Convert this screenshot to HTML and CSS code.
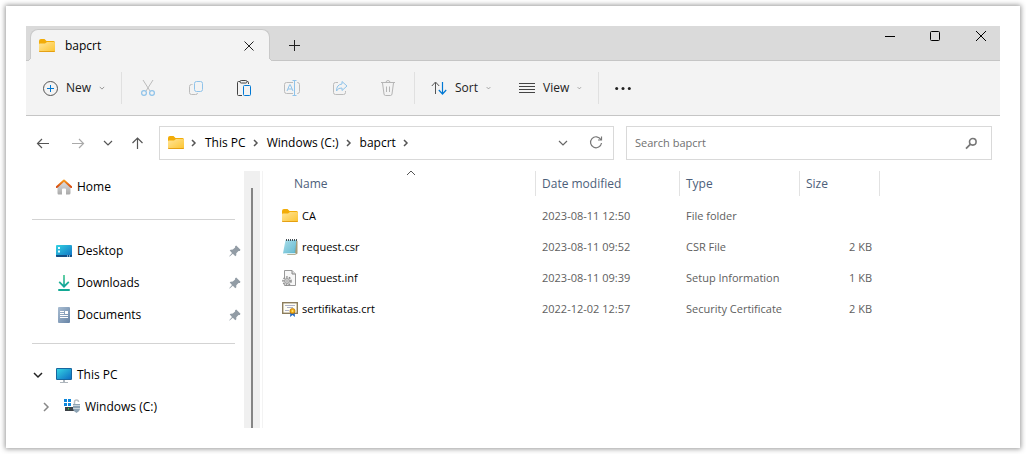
FILE: index.html
```html
<!DOCTYPE html>
<html lang="en">
<head>
<meta charset="utf-8">
<title>bapcrt</title>
<link rel="stylesheet" href="styles.css">
</head>
<body>
<svg class="defs" aria-hidden="true">
  <defs>
    <linearGradient id="g-folder" x1="0" y1="0" x2="1" y2="1"><stop offset="0" stop-color="#ffe59a"/><stop offset="1" stop-color="#fcc42f"/></linearGradient>
    <linearGradient id="g-screen" x1="0" y1="0" x2="1" y2="1"><stop offset="0" stop-color="#34d3e2"/><stop offset="1" stop-color="#0e6fc4"/></linearGradient>
    <linearGradient id="g-wall" x1="0" y1="0" x2="0" y2="1"><stop offset="0" stop-color="#e2e2e2"/><stop offset="1" stop-color="#a9a9a9"/></linearGradient>
    <linearGradient id="g-roof" x1="0" y1="0" x2="0" y2="1"><stop offset="0" stop-color="#f79a1c"/><stop offset="1" stop-color="#d5480f"/></linearGradient>
    <linearGradient id="g-down" x1="0" y1="0" x2="0" y2="1"><stop offset="0" stop-color="#3bc48c"/><stop offset="1" stop-color="#0b9f9b"/></linearGradient>
    <linearGradient id="g-doc" x1="0" y1="0" x2="1" y2="1"><stop offset="0" stop-color="#a9bdd2"/><stop offset="1" stop-color="#6784a6"/></linearGradient>
    <linearGradient id="g-note" x1="0" y1="0" x2="1" y2="1"><stop offset="0" stop-color="#b5e4ee"/><stop offset="1" stop-color="#54b2cc"/></linearGradient>
    <symbol id="folder" viewBox="0 0 16 16"><path d="M0 3Q0 1 2 1H5.500L7.500 3H14.500Q16 3 16 4.500V7H0Z" fill="#f2ac08"/><path d="M0 6.500Q0 5.500 1 5.500H6L8 4H15Q16 4 16 5V13Q16 14 15 14H1Q0 14 0 13Z" fill="url(#g-folder)"/><path d="M0 12.800Q.2 14 1 14H15Q15.800 14 16 12.800Q15.500 13.200 15 13.200H1Q.5 13.200 0 12.800Z" fill="#dd9100"/></symbol>
    <symbol id="chev-down" viewBox="0 0 16 16"><path d="M4 6L8 10L12 6" fill="none" stroke="currentColor" stroke-width="1.200"/></symbol>
    <symbol id="chev-small" viewBox="0 0 8 8"><path d="M1 2.500L4 5.500L7 2.500" fill="none" stroke="currentColor"/></symbol>
    <symbol id="chev-right" viewBox="0 0 16 16"><path d="M6 5L9 8L6 11" fill="none" stroke="currentColor" stroke-width="1.500"/></symbol>
    <symbol id="close" viewBox="0 0 16 16"><path d="M3.500 3.500L12.500 12.500M12.500 3.500L3.500 12.500" fill="none" stroke="currentColor"/></symbol>
    <symbol id="pin" viewBox="0 0 16 16"><path d="M9.200 2.500L13.500 6.800L12.800 8L11.500 7.900L9.300 10.200V12.300L8.300 13.200L5.800 10.700L2.700 13.600L2.200 13.300L5 9.900L2.700 7.500L3.600 6.700L5.800 6.600L8.100 4.400L8.100 3.200Z" fill="#929ca5"/></symbol>
  </defs>
</svg>
<main class="frame">
  <header class="titlebar">
    <div class="tab">
      <svg class="icon"><use href="#folder"/></svg>
      <span class="tab-title">bapcrt</span>
      <button class="tab-close" aria-label="Close tab"><svg class="icon"><use href="#close"/></svg></button>
    </div>
    <button class="tab-add" aria-label="New tab"><svg class="icon" viewBox="0 0 16 16"><path d="M8.500 3V14M3 8.500H14" fill="none" stroke="currentColor"/></svg></button>
    <div class="window-controls">
      <button aria-label="Minimize"><svg class="icon" viewBox="0 0 16 16"><path d="M4 8.500H14" stroke="#000"/></svg></button>
      <button aria-label="Maximize"><svg class="icon" viewBox="0 0 16 16"><rect x="3.500" y="3.500" width="9" height="9" rx="1" fill="none" stroke="#000"/></svg></button>
      <button aria-label="Close"><svg class="icon" viewBox="0 0 16 16"><path d="M3 3L13 13M13 3L3 13" stroke="#000"/></svg></button>
    </div>
  </header>

  <div class="toolbar">
    <button class="menu-button"><svg class="icon" viewBox="0 0 16 16" fill="none"><circle cx="8.500" cy="8.500" r="7" stroke="#555"/><path d="M8.500 5V12M5 8.500H12" stroke="#0078d4"/></svg>New<svg class="chev"><use href="#chev-small"/></svg></button>
    <span class="divider"></span>
    <div class="tools">
      <button aria-label="Cut" disabled><svg class="icon" viewBox="0 0 16 16" fill="none"><path d="M3 0L10 11M13 0L6 11" stroke="#bbb"/><g stroke="#8fc3ea" stroke-width="1.200"><circle cx="4" cy="13" r="2.400"/><circle cx="12" cy="13" r="2.400"/></g></svg></button>
      <button aria-label="Copy" disabled><svg class="icon" viewBox="0 0 16 16" fill="none"><path d="M4.500 4.500H3.500Q1.500 4.500 1.500 6.500V12.500Q1.500 14.500 3.500 14.500H7.500Q9.500 14.500 9.500 13" stroke="#bbb"/><rect x="6.500" y="1.500" width="8" height="10" rx="2" stroke="#8fc3ea"/></svg></button>
      <button aria-label="Paste"><svg class="icon" viewBox="0 0 16 16" fill="none"><path d="M6 15.500H2.500Q1.500 15.500 1.500 14.500V2.500Q1.500 1.500 2.500 1.500H4M11 1.500H11.500Q12.500 1.500 12.500 2.500V4" stroke="#444"/><rect x="4" y=".5" width="7" height="2.500" rx="1.200" stroke="#444"/><rect x="7.500" y="5.500" width="7" height="10" rx="1" stroke="#0078d4"/></svg></button>
      <button aria-label="Rename" disabled><svg class="icon" viewBox="0 0 16 16" fill="none"><path d="M9 2.500H2.500Q.5 2.500 .5 4.500V11.500Q.5 13.500 2.500 13.500H9M13 2.500H13.500Q15.500 2.500 15.500 4.500V11.500Q15.500 13.500 13.500 13.500H13" stroke="#bbb"/><path d="M3 11L5.700 4.700H6.300L9 11M4 9H8M8.500 .5H12.500M8.500 15.500H12.500M10.500 .5V15.500" stroke="#8fc3ea"/></svg></button>
      <button aria-label="Share" disabled><svg class="icon" viewBox="0 0 16 16" fill="none"><path d="M6 2.500H3.500Q1.500 2.500 1.500 4.500V12.500Q1.500 14.500 3.500 14.500H11.500Q13.500 14.500 13.500 12.500V11" stroke="#bbb"/><path d="M10 1.500L15 6L10 10.500V8Q6 7.500 4.500 11Q4.500 4.500 10 4Z" stroke="#8fc3ea" stroke-linejoin="round"/></svg></button>
      <button aria-label="Delete" disabled><svg class="icon" viewBox="0 0 16 16" fill="none" stroke="#b5b5b5"><path d="M1 2.500H15M2.500 3L4 14Q4.200 15.500 5.500 15.500H10.500Q11.800 15.500 12 14L13.500 3M6 2.500Q6 .5 8 .5Q10 .5 10 2.500M6.500 6.500V12M9.500 6.500V12"/></svg></button>
    </div>
    <span class="divider"></span>
    <button class="menu-button sort"><svg class="icon" viewBox="0 0 16 16" fill="none"><path d="M4.500 14V2.500M.8 6L4.500 2L8.200 6" stroke="#555"/><path d="M11.500 2V13.500M7.800 10L11.500 14L15.200 10" stroke="#0078d4" stroke-width="1.200"/></svg>Sort<svg class="chev"><use href="#chev-small"/></svg></button>
    <button class="menu-button"><svg class="icon" viewBox="0 0 16 16"><path d="M0 3.500H16M0 6.500H16M0 9.500H16M0 12.500H16" stroke="#444"/></svg>View<svg class="chev"><use href="#chev-small"/></svg></button>
    <span class="divider"></span>
    <button class="more" aria-label="See more"><svg class="icon" viewBox="0 0 16 16" fill="#222"><circle cx="1.700" cy="8.500" r="1.500"/><circle cx="8" cy="8.500" r="1.500"/><circle cx="14.300" cy="8.500" r="1.500"/></svg></button>
  </div>

  <div class="navbar">
    <div class="history">
      <button aria-label="Back"><svg class="icon" viewBox="0 0 16 16"><path d="M14 8.500H2.500M7 4L2.500 8.500L7 13" fill="none" stroke="#555" stroke-width="1.200"/></svg></button>
      <button aria-label="Forward"><svg class="icon" viewBox="0 0 16 16"><path d="M1 8.500H12.500M8 4L12.500 8.500L8 13" fill="none" stroke="#aaa" stroke-width="1.200"/></svg></button>
      <button class="recent" aria-label="Recent locations"><svg class="icon"><use href="#chev-down"/></svg></button>
      <button aria-label="Up"><svg class="icon" viewBox="0 0 16 16"><path d="M8.500 14V3M3.500 8L8.500 3L13.500 8" fill="none" stroke="#555" stroke-width="1.200"/></svg></button>
    </div>
    <nav class="address" aria-label="Address">
      <svg class="icon"><use href="#folder"/></svg>
      <svg class="crumb-sep"><use href="#chev-right"/></svg>
      <a href="#">This PC</a>
      <svg class="crumb-sep"><use href="#chev-right"/></svg>
      <a href="#">Windows (C:)</a>
      <svg class="crumb-sep"><use href="#chev-right"/></svg>
      <a href="#">bapcrt</a>
      <svg class="crumb-sep"><use href="#chev-right"/></svg>
      <div class="address-actions">
        <button aria-label="Previous locations"><svg class="icon"><use href="#chev-down"/></svg></button>
        <button aria-label="Refresh"><svg class="icon" viewBox="0 0 16 16"><path d="M12.800 4.500A5.500 5.500 0 1 0 13.500 8M13.500 1.500V5H10" fill="none" stroke="#777" stroke-width="1.200"/></svg></button>
      </div>
    </nav>
    <div class="search">
      <input type="text" placeholder="Search bapcrt" aria-label="Search bapcrt">
      <button aria-label="Search"><svg class="icon" viewBox="0 0 16 16"><circle cx="9.800" cy="6.800" r="3.300" fill="none" stroke="#777" stroke-width="1.600"/><path d="M7.500 9.200L3 13.700" stroke="#777" stroke-width="1.800"/></svg></button>
    </div>
  </div>

  <div class="body">
    <aside class="sidebar">
      <nav class="tree" aria-label="Folders">
        <a class="item" href="#"><svg class="icon" viewBox="0 0 16 16"><path d="M1.500 7L8 1.500L14.500 7V14Q14.500 15.500 13 15.500H10V10.500Q10 9.500 9 9.500H7Q6 9.500 6 10.500V15.500H2.500Q1.500 15.500 1.500 14Z" fill="url(#g-wall)"/><path d="M.8 8L8 1.500L15.200 8" fill="none" stroke="url(#g-roof)" stroke-width="2" stroke-linejoin="round" stroke-linecap="round"/></svg>Home</a>
        <hr>
        <a class="item" href="#"><svg class="icon" viewBox="0 0 16 16"><rect y="2" width="16" height="12" rx="1" fill="url(#g-screen)"/><path d="M0 12H16V13Q16 14 15 14H1Q0 14 0 13Z" fill="#124f87"/><path d="M2 4H4V6H2ZM2 7.500H4V9.500H2ZM11 12.500H12V13.500H11ZM13 12.500H14V13.500H13Z" fill="#e7fbff"/></svg>Desktop<svg class="pin"><use href="#pin"/></svg></a>
        <a class="item" href="#"><svg class="icon" viewBox="0 0 16 16"><path d="M7.200 0H8.800V9.600L12.200 6.200L13.400 7.500L8 13L2.600 7.500L3.800 6.200L7.200 9.600Z" fill="url(#g-down)"/><rect x="2" y="14" width="12" height="2" rx="1" fill="#12a994"/></svg>Downloads<svg class="pin"><use href="#pin"/></svg></a>
        <a class="item" href="#"><svg class="icon" viewBox="0 0 16 16"><rect x="2" width="12" height="16" rx="1" fill="url(#g-doc)"/><path d="M4 4H8V5H4ZM4 6H8V7H4ZM9 4H12V7H9ZM4 8H12V9H4ZM4 10H12V11H4Z" fill="#fff"/></svg>Documents<svg class="pin"><use href="#pin"/></svg></a>
        <hr class="close-rule">
        <a class="item" href="#"><svg class="twist" viewBox="0 0 16 16"><path d="M4 6L8 10L12 6" fill="none" stroke="#222" stroke-width="1.500"/></svg><svg class="icon" viewBox="0 0 16 16"><path d="M7 13H9V15H12V16H4V15H7Z" fill="#aeb6bd"/><rect y="1" width="16" height="12" rx="1" fill="#17669f"/><rect x="1" y="2" width="14" height="10" fill="url(#g-screen)"/></svg>This PC</a>
        <a class="item child" href="#"><svg class="twist" viewBox="0 0 16 16"><path d="M6 4L10 8L6 12" fill="none" stroke="#888" stroke-width="1.500"/></svg><svg class="icon" viewBox="0 0 16 16"><path d="M0 0H3V3H0ZM4 0H7V3H4ZM0 4H3V7H0ZM4 4H7V7H4Z" fill="#0b86dc"/><path d="M1 8H11V12H1Z" fill="#3b4146"/><path d="M4 9H5V10.500H4Z" fill="#39df46"/><path d="M10.500 5V3Q10.500 1 12.500 1Q14.500 1 14.500 3" fill="none" stroke="#b9bfc4" stroke-width="1.500"/><path d="M9 5H16V10Q16 12 12.500 14Q9 12 9 10Z" fill="#8da3b4"/><path d="M9 6.500H16M9 9.500H16" stroke="#c9d4dc"/></svg>Windows (C:)</a>
      </nav>
      <div class="scrollbar"><div class="thumb"></div></div>
    </aside>

    <section class="files">
      <table>
        <thead><tr>
          <th class="name"><span>Name<svg class="sort-mark" viewBox="0 0 16 16"><path d="M4 10L8 6L12 10" fill="none" stroke="#555"/></svg></span></th>
          <th class="date"><span>Date modified</span></th>
          <th class="type"><span>Type</span></th>
          <th class="size"><span>Size</span></th>
        </tr></thead>
        <tbody>
          <tr><td><a class="file" href="#"><svg class="icon"><use href="#folder"/></svg>CA</a></td><td>2023-08-11 12:50</td><td>File folder</td><td></td></tr>
          <tr><td><a class="file" href="#"><svg class="icon" viewBox="0 0 16 16"><path d="M13.500 1L15.500 2V14.500L13 16H5Z" fill="#a79c78"/><path d="M3.500 1H14.500L13 14.500H1Z" fill="url(#g-note)"/><path d="M4 4H13M3.700 6H13M3.400 8H12.700M3 10H12.400M2.700 12H12" stroke="#8fcddd" stroke-width=".6"/><path d="M1 14H13L14.500 15.200H3Z" fill="#d7f0f5"/><path d="M4.500 0V2M6.500 0V2M8.500 0V2M10.500 0V2M12.500 0V2M14.500 0V2" stroke="#454f55"/></svg>request.csr</a></td><td>2023-08-11 09:52</td><td>CSR File</td><td>2 KB</td></tr>
          <tr><td><a class="file" href="#"><svg class="icon" viewBox="0 0 16 16"><path d="M2.500 .5H10L13.500 4V15.500H2.500Z" fill="#f7f7f7" stroke="#999"/><path d="M10 .5V4H13.500" fill="#ddd" stroke="#888"/><circle cx="5" cy="11" r="4" fill="#f2f2f2" stroke="#888" stroke-width="1.500" stroke-dasharray="1.700 1.200"/><circle cx="5" cy="11" r="2.500" fill="#ddd" stroke="#999"/><circle cx="5" cy="11" r="1" fill="#fff" stroke="#777" stroke-width=".5"/></svg>request.inf</a></td><td>2023-08-11 09:39</td><td>Setup Information</td><td>1 KB</td></tr>
          <tr><td><a class="file" href="#"><svg class="icon" viewBox="0 0 16 16"><rect x=".7" y="1.700" width="14.600" height="10.600" fill="#fffef5" stroke="#8c7d5c" stroke-width="1.400"/><path d="M3 4.500H13M5 6.500H11M3 9.500H7" stroke="#9ba0bf" stroke-width=".8"/><path d="M8.500 11H12.500L13 16L10.500 14L8 16Z" fill="#1e68c6"/><circle cx="10.500" cy="10" r="2.600" fill="#efaa16" stroke="#b87409" stroke-width=".7"/><circle cx="10.500" cy="10" r="1" fill="#ffe36c"/></svg>sertifikatas.crt</a></td><td>2022-12-02 12:57</td><td>Security Certificate</td><td>2 KB</td></tr>
        </tbody>
      </table>
    </section>
  </div>
</main>
</body>
</html>
```
FILE: styles.css
```css
* { box-sizing: border-box; }

body {
  margin: 0;
  padding: 6px;
  background: #fff;
  color: #000;
  font: 12px/16px "Open Sans", "Noto Sans", sans-serif;
}

.defs { position: absolute; width: 0; height: 0; }

button {
  display: flex;
  align-items: center;
  justify-content: center;
  padding: 0;
  border: 0;
  background: none;
  color: #222;
  font: inherit;
}

a { color: inherit; text-decoration: none; }

.icon { flex: none; width: 16px; height: 16px; }

.frame {
  padding: 20px;
  background: #fff;
  box-shadow: 0 0 5px 1px #999;
}

/* Title bar */
.titlebar {
  display: flex;
  height: 35px;
  padding: 3px 0 0 4px;
  background: #dadada;
  box-shadow: inset 0 -1px #c5c5c5;
}

.tab {
  display: flex;
  position: relative;
  align-items: center;
  gap: 10px;
  width: 240px;
  padding: 0 12px 0 8px;
  border: 1px solid #c9c9c9;
  border-bottom: 0;
  border-radius: 8px 8px 0 0;
  background: #f3f3f3;
}

/* Flared feet where the tab meets the command bar */
.tab::before, .tab::after {
  content: "";
  position: absolute;
  bottom: 0;
  width: 4px;
  height: 4px;
}

.tab::before {
  right: 100%;
  background: radial-gradient(circle at 0 0, #dadada 3px, #c9c9c9 3px, #c9c9c9 4px, #f3f3f3 4px);
}

.tab::after {
  left: 100%;
  background: radial-gradient(circle at 100% 0, #dadada 3px, #c9c9c9 3px, #c9c9c9 4px, #f3f3f3 4px);
}

.tab-close { margin-left: auto; }
.tab-add { width: 48px; }

.window-controls {
  display: flex;
  gap: 8px;
  height: 14px;
  margin-left: auto;
}

.window-controls button { width: 38px; }

/* Command bar */
.toolbar {
  display: flex;
  align-items: center;
  height: 55px;
  border-bottom: 1px solid #c5c5c5;
  background: #f3f3f3;
}

.menu-button {
  justify-content: flex-start;
  gap: 8px;
  width: 95px;
  height: 32px;
  padding: 0 16px;
}

.menu-button.sort { width: 88px; padding-right: 12px; }

.chev { width: 8px; height: 8px; margin-left: auto; color: #777; }

.divider { width: 1px; height: 32px; background: #e0e0e0; }

.tools { display: flex; padding: 0 2px; }
.tools button, .more { width: 48px; height: 32px; }

/* Address and search */
.navbar {
  display: flex;
  align-items: center;
  padding: 10px 8px 11px 1px;
}

.history { display: flex; gap: 4px; margin-right: 6px; }
.history button { width: 32px; height: 32px; color: #555; }
.history .recent { width: 18px; }

.address, .search {
  display: flex;
  align-items: center;
  height: 34px;
  border: 1px solid #d9d9d9;
}

.address { flex: 455 1 455px; padding: 0 9px 0 8px; }
.search { flex: 366 1 366px; margin-left: 12px; padding: 0 12px 0 8px; }

.crumb-sep { width: 16px; height: 16px; margin: 0 3px 0 2px; color: #555; }
.address-actions { display: flex; gap: 17px; margin-left: auto; }
.address-actions button { color: #666; }

.search input {
  flex: 1;
  min-width: 0;
  padding: 0;
  border: 0;
  outline: 0;
  background: none;
  color: #222;
  font: inherit;
  font-size: 11px;
}

.search input::placeholder { color: #707070; opacity: 1; }

/* Folder tree */
.body { display: flex; }

.sidebar {
  display: flex;
  width: 237px;
  border-right: 1px solid #f3f3f3;
}

.tree { flex: 1; padding-bottom: 5px; }

.item {
  display: flex;
  align-items: center;
  gap: 5px;
  height: 32px;
  padding: 0 1px 0 30px;
}

.item .twist { width: 16px; height: 16px; margin: 0 5px 0 -26px; }
.item.child { padding-left: 38px; }
.pin { width: 16px; height: 16px; margin-left: auto; }

hr {
  height: 1px;
  margin: 16px 9px 15px 6px;
  border: 0;
  background: #d3d3d3;
}

hr.close-rule { margin-top: 12px; }

.scrollbar {
  width: 16px;
  margin-right: 2px;
  padding: 17px 7px 0;
  background: #f0f0f0;
}

.thumb { height: 100%; background: #858585; }

/* File list */
.files { flex: 1; }

table { width: 617px; border-spacing: 0; table-layout: fixed; }
th, td { padding: 0; text-align: left; }
th { padding-bottom: 4px; color: #4c607a; font-weight: 400; }

th span {
  display: flex;
  position: relative;
  align-items: center;
  height: 25px;
  padding-left: 6px;
  border-right: 1px solid #e2e2e2;
}

.name span { padding-left: 31px; }
.name { width: 273px; }
.date { width: 144px; }
.type { width: 120px; }

.sort-mark { position: absolute; top: -6px; left: 140px; width: 16px; height: 16px; }

td { height: 31px; padding-left: 6px; color: #606060; font-size: 11px; }
td:first-child { padding-left: 19px; }
td:last-child { padding-right: 8px; text-align: right; }

.file { display: flex; align-items: center; gap: 4px; color: #000; }
```
